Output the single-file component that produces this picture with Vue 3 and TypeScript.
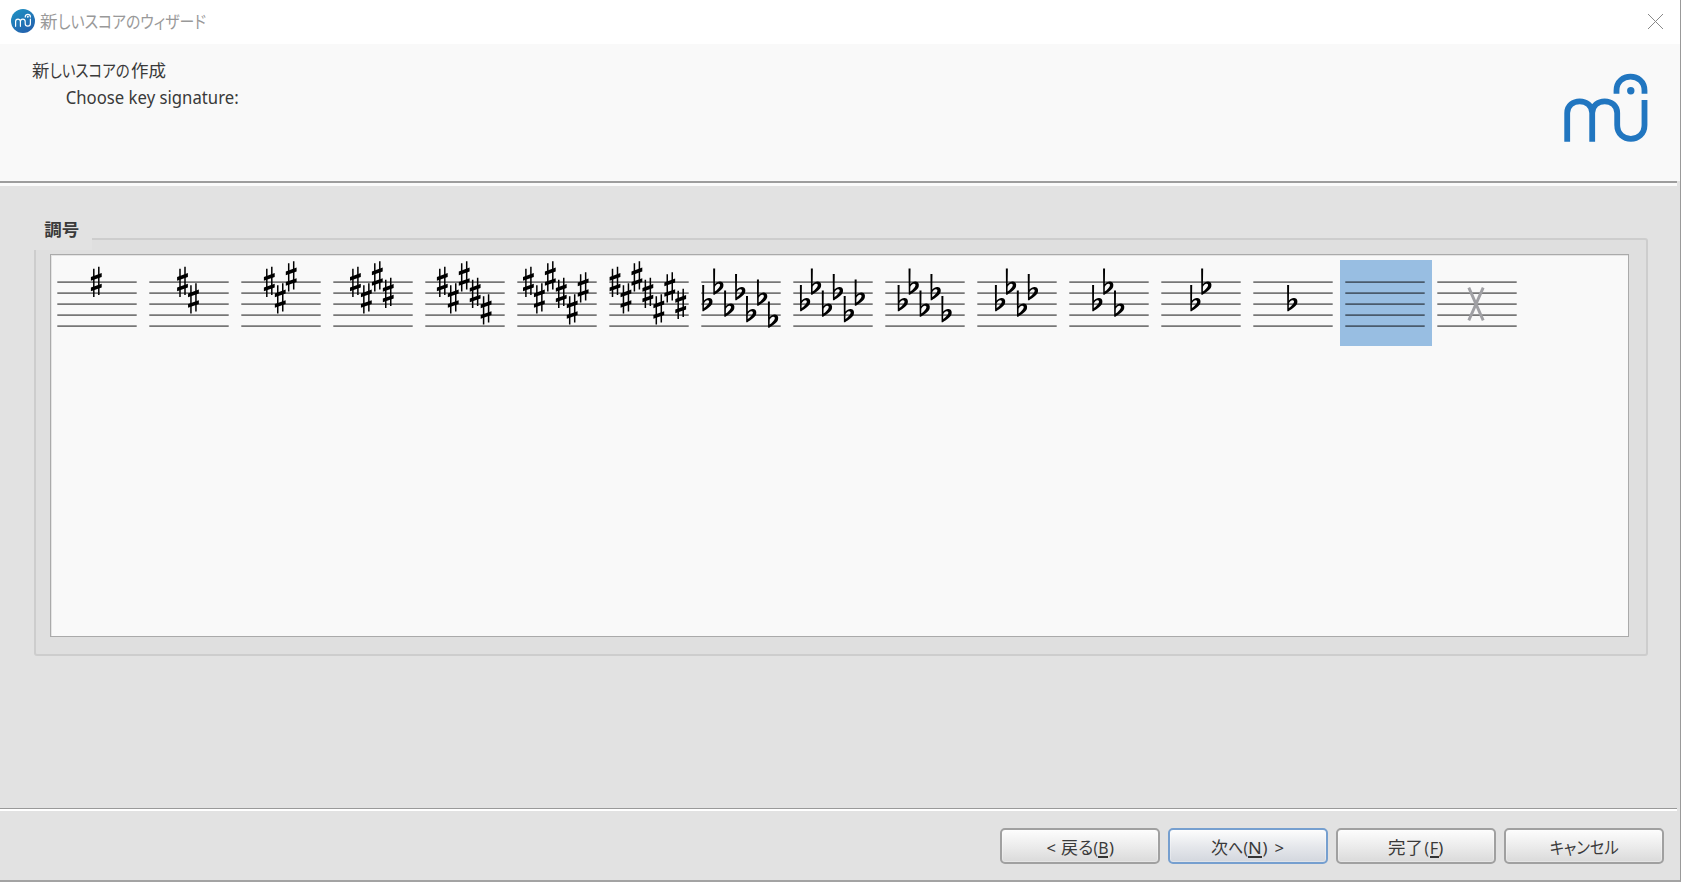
<script setup lang="ts">
interface Glyph { x: number; y: number }
interface Cell { kind: 'sharp' | 'flat' | 'none' | 'open'; glyphs: Glyph[]; selected: boolean }
interface Seg { t: string; x: number; w: number; u?: boolean }
interface Btn { name: string; segs: Seg[]; primary?: boolean }

const FIRST_LINE = 22.1
const STEP = 5.5
const sharpSteps = [0, 3, -1, 2, 5, 1, 4]
const flatSteps = [4, 1, 5, 2, 6, 3, 7]
const sharpStart = [44.3, 38.5, 33.3, 27.4, 22.3, 16.4, 11]
const flatStart = [40.2, 35.3, 29.2, 24, 18.7, 13, 7.3]

function build(steps: number[], start: number, count: number): Glyph[] {
  return steps.slice(0, count).map((s, i) => ({ x: start + i * 10.95, y: FIRST_LINE + s * STEP }))
}

const cells: Cell[] = [
  ...[1, 2, 3, 4, 5, 6, 7].map((n): Cell => ({ kind: 'sharp', glyphs: build(sharpSteps, sharpStart[n - 1], n), selected: false })),
  ...[7, 6, 5, 4, 3, 2, 1].map((n): Cell => ({ kind: 'flat', glyphs: build(flatSteps, flatStart[n - 1], n), selected: false })),
  { kind: 'none', glyphs: [], selected: true },
  { kind: 'open', glyphs: [], selected: false },
]
const staff = [0, 1, 2, 3, 4].map((n) => FIRST_LINE + n * 11)

const titleSegs: Seg[] = [
  { t: '新', x: 40, w: 17.5 },
  { t: 'しいスコアのウィザード', x: 58, w: 148 },
]
const headSegs: Seg[] = [
  { t: '新', x: 32, w: 17.3 },
  { t: 'しいスコアの', x: 49.6, w: 80 },
  { t: '作成', x: 131, w: 35 },
]
const buttons: Btn[] = [
  {
    name: 'back',
    segs: [
      { t: '<', x: 46.5, w: 9.5 },
      { t: '戻', x: 61, w: 17 },
      { t: 'る', x: 78.3, w: 15 },
      { t: '(', x: 93.5, w: 4.5 },
      { t: 'B', x: 98.2, w: 10.3, u: true },
      { t: ')', x: 109, w: 5 },
    ],
  },
  {
    name: 'next',
    primary: true,
    segs: [
      { t: '次', x: 43, w: 17 },
      { t: 'へ', x: 60.2, w: 15 },
      { t: '(', x: 75.4, w: 4.5 },
      { t: 'N', x: 80, w: 13.8, u: true },
      { t: ')', x: 94.5, w: 5 },
      { t: '>', x: 106.5, w: 9.5 },
    ],
  },
  {
    name: 'finish',
    segs: [
      { t: '完了', x: 52, w: 35 },
      { t: '(', x: 88.5, w: 4.5 },
      { t: 'F', x: 93.7, w: 8.5, u: true },
      { t: ')', x: 102.3, w: 5 },
    ],
  },
  { name: 'cancel', segs: [{ t: 'キャンセル', x: 45.7, w: 69 }] },
]
</script>

<template>
  <div class="window">
    <header class="titlebar">
      <svg class="title-art" width="300" height="44">
        <defs>
          <linearGradient id="disc" x1="0" y1="0" x2="0.6" y2="1">
            <stop offset="0" stop-color="#1f94c4" />
            <stop offset="1" stop-color="#2363ae" />
          </linearGradient>
        </defs>
        <circle cx="23" cy="21" r="12" fill="url(#disc)" />
        <g transform="translate(15.6 14.4) scale(0.192)" fill="none" stroke="#fff" stroke-width="6.2" stroke-linecap="round">
          <path d="M0 62V37C0 20 25 20 25 37V62M25 37C25 20 50 20 50 37V47C50 66 77 66 77 47V24M50 14C50 -5 77 -5 77 14" />
          <circle cx="63.5" cy="12" r="2" fill="#fff" />
        </g>
        <text v-for="s in titleSegs" :key="s.t" class="cjk title-text" :x="s.x" y="28.3" :textLength="s.w" lengthAdjust="spacingAndGlyphs">{{ s.t }}</text>
      </svg>
      <svg class="close" width="17" height="17">
        <path d="M1 1L16 16M16 1L1 16" stroke="#888" stroke-width="1" />
      </svg>
    </header>

    <section class="banner">
      <svg class="heading" width="300" height="80">
        <text v-for="s in headSegs" :key="s.t" class="cjk" :x="s.x" y="33.4" :textLength="s.w" lengthAdjust="spacingAndGlyphs">{{ s.t }}</text>
        <text class="latin" x="65.7" y="60" textLength="173" lengthAdjust="spacingAndGlyphs">Choose key signature:</text>
      </svg>
      <svg class="logo" width="84" height="69" viewBox="1564.5 73 84 69">
        <g fill="none" stroke="#2176c0" stroke-width="5.8">
          <path d="M1567.7 141.7V113C1567.7 97.5 1592.7 97.5 1592.7 113V141.7M1592.7 113C1592.7 97.5 1617.7 97.5 1617.7 113V125C1617.7 143.5 1645 143.5 1645 125V100" />
          <path d="M1617 93.7V90.5C1617 72 1645 72 1645 90.5V93.7" />
        </g>
        <circle cx="1631.3" cy="90.7" r="3.7" fill="#2176c0" />
      </svg>
    </section>
    <div class="rule-top"></div>

    <main class="content">
      <div class="group">
        <div class="legend">
          <svg width="58" height="30"><text class="cjk bold" x="10.3" y="15.7" textLength="35" lengthAdjust="spacingAndGlyphs">調号</text></svg>
        </div>
        <div class="palette">
          <div v-for="(c, i) in cells" :key="i" class="cell" :class="{ selected: c.selected }">
            <svg width="92" height="86">
              <line v-for="y in staff" :key="y" x1="5.3" x2="84.7" :y1="y" :y2="y" stroke="#000" stroke-opacity="0.52" stroke-width="1.8" />
              <template v-if="c.kind === 'sharp'">
                <g v-for="(g, j) in c.glyphs" :key="j" :transform="`translate(${g.x} ${g.y})`">
                  <path d="M-2.5 -13.3V14.9M2.5 -15.3V12.8" stroke="#000" stroke-width="1.5" />
                  <path d="M-5.4 -5.2L5.4 -9V-5.2L-5.4 -1.4ZM-5.4 5.4L5.4 1.6V5.4L-5.4 9.2Z" />
                </g>
              </template>
              <template v-else-if="c.kind === 'flat'">
                <g v-for="(g, j) in c.glyphs" :key="j" :transform="`translate(${g.x} ${g.y})`">
                  <path fill-rule="evenodd" d="M-1.1 -19H.9L.7 -3.6C2.2 -5.3 4.2 -6.2 6 -6C8.8 -5.7 9.7 -3.3 9 -.8C8 2.5 3.7 4.7 .3 7.2H-.9ZM.7 -.8L.6 4C3 2.3 5.5 0 5.8 -2C6 -3.7 4.8 -4.4 3.2 -3.5C2 -2.8 1.1 -1.7 .7 -.8Z" />
                </g>
              </template>
              <path v-else-if="c.kind === 'open'" d="M36.8 27.7L51.2 60.3M51.2 27.7L36.8 60.3" stroke="#a0a0a4" stroke-width="2.9" />
            </svg>
          </div>
        </div>
      </div>
    </main>

    <div class="rule-bottom"></div>
    <footer class="footer">
      <button v-for="b in buttons" :key="b.name" class="btn" :class="{ primary: b.primary }">
        <svg width="160" height="36">
          <template v-for="s in b.segs" :key="s.t">
            <text class="cjk button-text" :x="s.x" y="25.6" :textLength="s.w" lengthAdjust="spacingAndGlyphs">{{ s.t }}</text>
            <rect v-if="s.u" :x="Math.round(s.x)" y="28" :width="Math.round(s.w)" height="2" fill="#333" />
          </template>
        </svg>
      </button>
    </footer>
  </div>
</template>

<style>
html, body { margin: 0; overflow: hidden; }
</style>

<style scoped>
.window {
  box-sizing: border-box;
  width: 1681px;
  height: 882px;
  display: flex;
  flex-direction: column;
  background: #e2e2e2;
  border-right: 1px solid #999;
  border-bottom: 2px solid #a3a3a3;
  overflow: hidden;
}
svg { display: block; }
.cjk { font-family: "Noto Sans", "Noto Sans CJK JP", sans-serif; font-size: 17.5px; fill: #3a3a3a; font-feature-settings: "palt"; }
.latin { font-family: "Noto Sans", sans-serif; font-size: 17.5px; fill: #3a3a3a; }
.title-text { fill: #999; }
.bold { font-weight: 700; font-size: 17px; }
.button-text { font-size: 17px; }
.titlebar { height: 44px; flex: none; display: flex; justify-content: space-between; background: #fff; }
.close { margin: 13px 16px 0 0; }
.banner { height: 137px; flex: none; display: flex; justify-content: space-between; background: #f9f9f9; }
.logo { margin: 29px 32px 0 0; }
.rule-top { height: 3px; flex: none; border-top: 2px solid #9d9d9d; margin-right: 3px; background: #fafafa; }
.content { flex: 1; padding: 52px 32px 0 34px; }
.group {
  box-sizing: border-box;
  height: 418px;
  border: 2px solid #cdcdcd;
  border-radius: 3px;
  padding: 14px 17px 17px 14px;
  background: #dfdfdf;
  position: relative;
}
.legend { position: absolute; left: -2px; top: -20px; width: 58px; height: 30px; background: #e2e2e2; }
.palette {
  box-sizing: border-box;
  height: 383px;
  width: 1579px;
  border: 1px solid #aaa;
  box-shadow: inset 1px 1px 0 #e4e4e4;
  background: #f9f9f9;
  padding: 5px 1px;
  display: flex;
}
.cell { width: 92px; height: 86px; flex: none; }
.selected { background: #98bee2; }
.rule-bottom { height: 2px; flex: none; border-top: 1px solid #999; background: #fff; margin-right: 3px; }
.footer { height: 69px; flex: none; box-sizing: border-box; padding: 17px 16px 0 0; display: flex; justify-content: flex-end; gap: 8px; }
.btn {
  width: 160px;
  height: 36px;
  padding: 0;
  border: 2px solid #a0a0a0;
  border-radius: 5px;
  background: linear-gradient(#fdfdfd, #ececec 50%, #dadada);
  box-shadow: inset 0 0 0 1px rgba(255, 255, 255, 0.3);
}
.btn svg { margin: -2px; }
.primary { border-color: #769fcf; background: linear-gradient(#fdfdfd, #e6e8ec 50%, #d3d7de); }
</style>
